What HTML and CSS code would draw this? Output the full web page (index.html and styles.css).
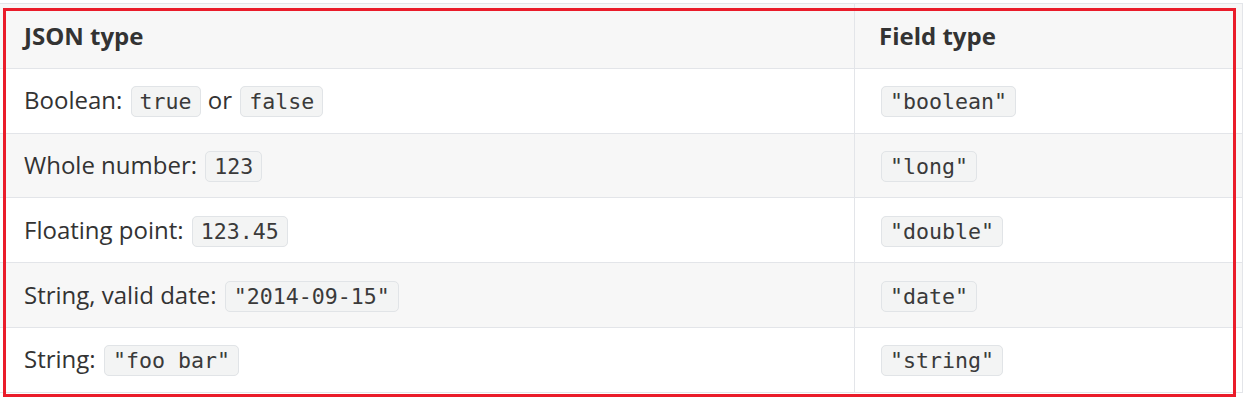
FILE: index.html
```html
<!DOCTYPE html>
<html>
<head>
<meta charset="utf-8">
<link rel="stylesheet" href="styles.css">
</head>
<body>
<div class="wrap">
  <table class="types">
    <thead>
      <tr><th class="c1">JSON type</th><th>Field type</th></tr>
    </thead>
    <tbody>
      <tr><td>Boolean: <code>true</code> or <code>false</code></td><td><code>"boolean"</code></td></tr>
      <tr><td>Whole number: <code>123</code></td><td><code>"long"</code></td></tr>
      <tr><td>Floating point: <code>123.45</code></td><td><code>"double"</code></td></tr>
      <tr><td>String, valid date: <code>"2014-09-15"</code></td><td><code>"date"</code></td></tr>
      <tr><td>String: <code>"foo bar"</code></td><td><code>"string"</code></td></tr>
    </tbody>
  </table>
  <div class="highlight"></div>
</div>
</body>
</html>
```
FILE: styles.css
```css
html, body {
  margin: 0;
  padding: 0;
  background: #ffffff;
}
body {
  font-family: "Open Sans", "Noto Sans", sans-serif;
  color: #333333;
  overflow: hidden;
}
.wrap {
  position: relative;
  padding-top: 3px;
  height: 402px;
}
.types {
  border-collapse: collapse;
  width: 1244px;
  margin-left: -1px;
  font-size: 24px;
  line-height: 40.8px;
}
.types th,
.types td {
  border: 1px solid #e3e5e9;
  padding: 11.5px 24px 11.5px 24px;
  text-align: left;
  vertical-align: middle;
}
.types th {
  font-weight: 700;
  background: #f7f7f7;
}
.types .c1 {
  width: 806px;
}
.types tbody tr:nth-child(even) td {
  background: #f7f7f7;
}
.types code {
  font-family: "DejaVu Sans Mono", monospace;
  font-size: 21.6px;
  line-height: 1;
  background: #f3f4f4;
  border: 1px solid #e1e4e7;
  border-radius: 5px;
  padding: 2px 8px;
  margin: 0 1px 0 2px;
  color: #3a3a3a;
}
.highlight {
  position: absolute;
  left: 3px;
  top: 8px;
  width: 1227px;
  height: 383px;
  border: 3px solid #ea1c2a;
  pointer-events: none;
}
```
